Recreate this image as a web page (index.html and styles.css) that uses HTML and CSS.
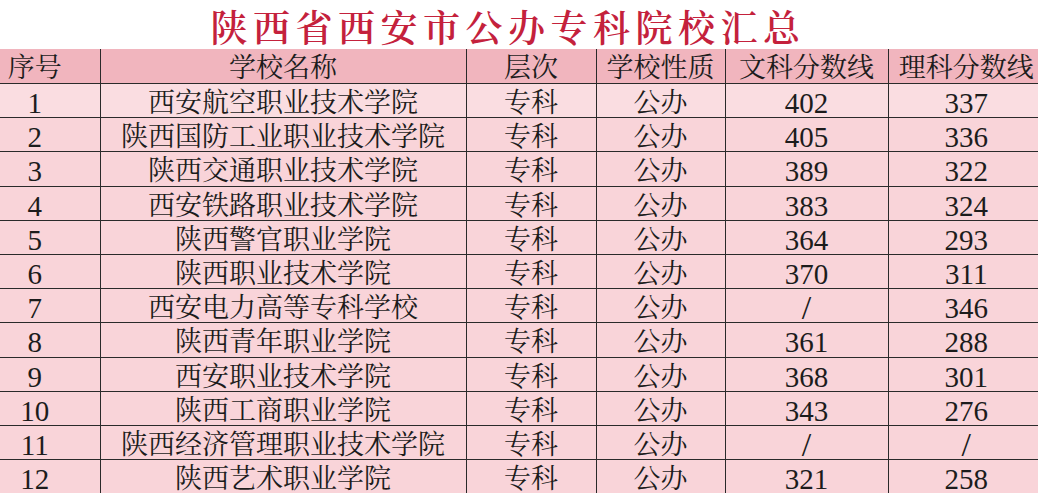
FILE: index.html
```html
<!DOCTYPE html>
<html lang="zh">
<head>
<meta charset="utf-8">
<link rel="stylesheet" href="styles.css">
</head>
<body>
<div class="page">
  <h1 class="title">陕西省西安市公办专科院校汇总</h1>
  <table class="grid">
    <colgroup>
      <col class="c-no"><col class="c-name"><col class="c-lvl"><col class="c-type"><col class="c-wen"><col class="c-li">
    </colgroup>
    <thead>
      <tr><th class="no">序号</th><th>学校名称</th><th>层次</th><th>学校性质</th><th>文科分数线</th><th>理科分数线</th></tr>
    </thead>
    <tbody>
      <tr><td class="no num">1</td><td>西安航空职业技术学院</td><td>专科</td><td>公办</td><td class="num">402</td><td class="num">337</td></tr>
      <tr><td class="no num">2</td><td>陕西国防工业职业技术学院</td><td>专科</td><td>公办</td><td class="num">405</td><td class="num">336</td></tr>
      <tr><td class="no num">3</td><td>陕西交通职业技术学院</td><td>专科</td><td>公办</td><td class="num">389</td><td class="num">322</td></tr>
      <tr><td class="no num">4</td><td>西安铁路职业技术学院</td><td>专科</td><td>公办</td><td class="num">383</td><td class="num">324</td></tr>
      <tr><td class="no num">5</td><td>陕西警官职业学院</td><td>专科</td><td>公办</td><td class="num">364</td><td class="num">293</td></tr>
      <tr><td class="no num">6</td><td>陕西职业技术学院</td><td>专科</td><td>公办</td><td class="num">370</td><td class="num">311</td></tr>
      <tr><td class="no num">7</td><td>西安电力高等专科学校</td><td>专科</td><td>公办</td><td class="num slash">/</td><td class="num">346</td></tr>
      <tr><td class="no num">8</td><td>陕西青年职业学院</td><td>专科</td><td>公办</td><td class="num">361</td><td class="num">288</td></tr>
      <tr><td class="no num">9</td><td>西安职业技术学院</td><td>专科</td><td>公办</td><td class="num">368</td><td class="num">301</td></tr>
      <tr><td class="no num">10</td><td>陕西工商职业学院</td><td>专科</td><td>公办</td><td class="num">343</td><td class="num">276</td></tr>
      <tr><td class="no num">11</td><td>陕西经济管理职业技术学院</td><td>专科</td><td>公办</td><td class="num slash">/</td><td class="num slash">/</td></tr>
      <tr><td class="no num">12</td><td>陕西艺术职业学院</td><td>专科</td><td>公办</td><td class="num">321</td><td class="num">258</td></tr>
    </tbody>
  </table>
</div>
</body>
</html>
```

FILE: styles.css
```css
html, body {
  margin: 0;
  padding: 0;
  background: #ffffff;
}
body {
  width: 1038px;
  height: 493px;
  overflow: hidden;
}
.page {
  width: 1038px;
}
.title {
  margin: 0;
  height: 49px;
  text-align: center;
  font-family: "Noto Serif CJK SC", "Noto Sans CJK SC", serif;
  font-weight: 600;
  font-size: 37px;
  line-height: 52px;
  letter-spacing: 5.5px;
  color: #c4213c;
  text-indent: -22px;
}
.grid {
  border-collapse: collapse;
  table-layout: fixed;
  width: 1044px;
  font-family: "Liberation Serif", "Noto Serif CJK SC", "Noto Sans CJK SC", serif;
  font-size: 27px;
  color: #1c1c1c;
}
.c-no { width: 100px; }
.c-name { width: 366px; }
.c-lvl { width: 130px; }
.c-type { width: 129px; }
.c-wen { width: 163px; }
.c-li { width: 156px; }
.grid th, .grid td {
  padding: 5px 0 0 0;
  text-align: center;
  vertical-align: middle;
  font-weight: 400;
  white-space: nowrap;
  border-left: 1px solid #2a2a2a;
  border-bottom: 1px solid #2a2a2a;
  line-height: 28px;
}
.grid th:first-child, .grid td:first-child {
  border-left: none;
}
.grid th {
  background: #f1b5be;
  height: 31px;
  padding-top: 3px;
  line-height: 30px;
}
.grid td {
  background: #f9d4d9;
  height: 28.2px;
}
.grid tbody tr:first-child td {
  background: #fadde1;
}
.grid td.num {
  font-size: 29px;
}
.grid td.slash {
  font-size: 34px;
  font-weight: 300;
}
.grid .no {
  padding-right: 30px;
}
```
